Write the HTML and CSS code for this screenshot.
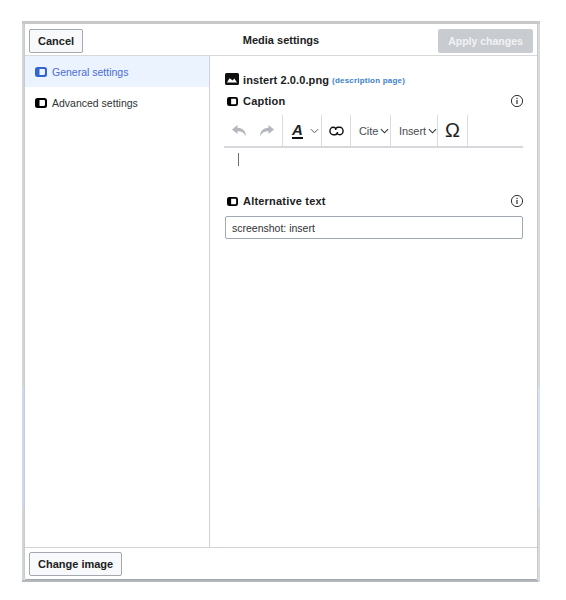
FILE: index.html
```html
<!DOCTYPE html>
<html lang="en">
<head>
<meta charset="utf-8">
<title>Media settings</title>
<link rel="stylesheet" href="styles.css">
</head>
<body>
<div class="backdrop">
  <span class="strip strip-left"></span>
  <span class="strip strip-right"></span>
  <span class="smudge"></span>
  <div class="dialog">
    <header class="head">
      <button class="btn">Cancel</button>
      <div class="title">Media settings</div>
      <button class="btn-apply">Apply changes</button>
    </header>
    <div class="body">
      <nav class="side">
        <div class="side-item active">
          <svg class="ico" viewBox="0 0 12 12"><use href="#mark"/></svg>
          <span>General settings</span>
        </div>
        <div class="side-item">
          <svg class="ico" viewBox="0 0 12 12"><use href="#mark"/></svg>
          <span>Advanced settings</span>
        </div>
      </nav>
      <main class="main">
        <div class="file">
          <svg class="img-ico" viewBox="0 0 14 12"><path fill="#111" fill-rule="evenodd" d="M1.5 0h11A1.5 1.5 0 0 1 14 1.5v9a1.5 1.5 0 0 1-1.5 1.5h-11A1.5 1.5 0 0 1 0 10.500v-9A1.500 1.500 0 0 1 1.500 0zM2 9.500h10L9.300 5.500 7.600 7.600 6 6.300 4.500 5.200z"/></svg>
          <span class="file-name">instert 2.0.0.png</span>
          <span class="file-link">(description page)</span>
        </div>
        <div class="field-label caption-label">
          <svg class="ico" viewBox="0 0 12 12"><use href="#mark"/></svg>
          <span class="label-text">Caption</span>
          <svg class="info" viewBox="0 0 14 14"><use href="#info"/></svg>
        </div>
        <div class="toolbar">
          <div class="group history">
            <svg class="tool-ico" viewBox="0 0 15 11"><path fill="#b4b8bd" d="M5.500 0 0 4.500 5.500 9V6.200c3.500 0 6 1 8.500 4.800 0-4.500-3-8-8.500-8.300z"/></svg>
            <svg class="tool-ico" viewBox="0 0 15 11"><path fill="#b4b8bd" d="M9.500 0 15 4.500 9.500 9V6.200C6 6.200 3.500 7.200 1 11c0-4.500 3-8 8.500-8.300z"/></svg>
          </div>
          <div class="group style">
            <span class="style-a">A</span>
            <svg class="chev" viewBox="0 0 10 6"><path d="M1 1l4 4 4-4" fill="none" stroke="#555" stroke-width="1.100"/></svg>
          </div>
          <div class="group link">
            <svg class="link-ico" viewBox="0 0 16 10"><path fill="none" stroke="#111" stroke-width="1.500" d="M7 2.200C6.200 1.400 5.400 1 4.400 1 2.500 1 1 2.800 1 5s1.500 4 3.400 4h1.800c1.600 0 2.800-1.400 2.800-3M9 7.800c.8.800 1.600 1.200 2.600 1.200C13.500 9 15 7.200 15 5s-1.500-4-3.400-4H9.800C8.200 1 7 2.400 7 4"/></svg>
          </div>
          <div class="group menu cite"><span>Cite</span><svg class="chev dark" viewBox="0 0 10 6"><path d="M1 1l4 4 4-4" fill="none" stroke="#333" stroke-width="1.200"/></svg></div>
          <div class="group menu insert"><span>Insert</span><svg class="chev dark" viewBox="0 0 10 6"><path d="M1 1l4 4 4-4" fill="none" stroke="#333" stroke-width="1.200"/></svg></div>
          <div class="group omega">Ω</div>
        </div>
        <div class="caption-edit"><span class="cursor"></span></div>
        <div class="field-label alt-label">
          <svg class="ico" viewBox="0 0 12 12"><use href="#mark"/></svg>
          <span class="label-text">Alternative text</span>
          <svg class="info" viewBox="0 0 14 14"><use href="#info"/></svg>
        </div>
        <div class="input">screenshot: insert</div>
      </main>
    </div>
    <footer class="foot">
      <button class="btn">Change image</button>
    </footer>
  </div>
</div>
<svg class="defs" width="0" height="0">
  <defs>
    <symbol id="mark" viewBox="0 0 12 12">
      <path fill="currentColor" fill-rule="evenodd" d="M2.500 1h7A2.500 2.500 0 0 1 12 3.500v5A2.500 2.500 0 0 1 9.500 11h-7A2.500 2.500 0 0 1 0 8.500v-5A2.500 2.500 0 0 1 2.500 1zM4.500 3v6h4.300c.7 0 1.200-.5 1.200-1.200V4.200C10 3.500 9.500 3 8.800 3z"/>
    </symbol>
    <symbol id="info" viewBox="0 0 14 14">
      <circle cx="7" cy="7" r="5.600" fill="none" stroke="#333" stroke-width="1"/>
      <rect x="6.400" y="6" width="1.200" height="4" fill="#333"/>
      <rect x="6.400" y="3.800" width="1.200" height="1.300" fill="#333"/>
    </symbol>
  </defs>
</svg>
</body>
</html>
```
FILE: styles.css
```css
* { box-sizing: border-box; }
html, body { margin: 0; padding: 0; background: #fff; }
body {
  width: 566px;
  height: 600px;
  overflow: hidden;
  font-family: "Liberation Sans", Arial, sans-serif;
  color: #202122;
}
.backdrop {
  position: relative;
  width: 518px;
  height: 561px;
  margin: 21px 0 0 22px;
  padding: 3px 2px 2px;
  background: linear-gradient(#c6c8ca, #c6c8ca) top / 100% 3px no-repeat,
    linear-gradient(#d2d4d6, #d2d4d6) left / 2px 100% no-repeat,
    linear-gradient(#d8dadc, #d8dadc) right / 2px 100% no-repeat;
}
.strip { position: absolute; top: 366px; height: 120px; width: 2px; background: #c9d9f2; }
.strip-left { left: 0; }
.strip-right { right: 0; background: #d6e2f8; }
.smudge {
  position: absolute;
  left: 0;
  right: 2px;
  bottom: 0;
  height: 2px;
  background: #b4b6b9;
}
.dialog {
  display: flex;
  flex-direction: column;
  height: 100%;
  background: #fff;
  border-right: 1px solid #c8ccd1;
  border-left: 1px solid #c8ccd1;
  border-bottom: 1px solid #a2a9b1;
  border-radius: 0 0 2px 2px;
  position: relative;
}
.head {
  display: grid;
  grid-template-columns: 1fr auto 1fr;
  align-items: start;
  height: 32px;
  padding: 5px 4px 0;
  border-bottom: 1px solid #d6d8da;
}
.btn {
  height: 24px;
  padding: 0 8px;
  font: bold 11px "Liberation Sans", Arial, sans-serif;
  color: #202122;
  background: #f8f9fa;
  border: 1px solid #a2a9b1;
  border-radius: 2px;
}
.head .btn { justify-self: start; }
.title { font-size: 11px; font-weight: bold; line-height: 22px; color: #202122; }
.btn-apply {
  justify-self: end;
  width: 95px;
  height: 24px;
  padding: 0;
  font: bold 10.500px "Liberation Sans", Arial, sans-serif;
  color: #f2f3f4;
  background: #c8ccd1;
  border: 0;
  border-radius: 2px;
}
.body { flex: 1; display: flex; min-height: 0; }
.side { width: 185px; flex: none; border-right: 1px solid #d0d2d5; }
.side-item {
  display: flex;
  align-items: center;
  gap: 5px;
  height: 31px;
  padding: 1px 0 0 10px;
  font-size: 10.500px;
  color: #303234;
}
.side-item.active { background: #eaf3ff; color: #4a6cd4; }
.ico { width: 12px; height: 12px; flex: none; color: #000; }
.active .ico { color: #3366cc; }
.main { flex: 1; padding: 15px 15px 0 14px; }
.file { display: flex; align-items: center; height: 18px; }
.img-ico { width: 14px; height: 12px; margin-left: 1px; margin-right: 4px; margin-top: -3px; flex: none; }
.file-name { font-size: 11px; font-weight: bold; letter-spacing: .1px; color: #202122; }
.file-link { font-size: 8px; font-weight: bold; margin-left: 3px; letter-spacing: .2px; color: #3b82c8; }
.field-label { display: flex; align-items: center; height: 16px; padding-left: 3px; }
.field-label .ico { margin-right: 5px; width: 11px; height: 11px; }
.label-text { font-size: 11px; font-weight: bold; letter-spacing: .2px; color: #202122; }
.caption-label { margin-top: 4px; }
.info { width: 14px; height: 14px; margin-left: auto; margin-right: -1px; flex: none; }
.toolbar {
  display: flex;
  height: 33px;
  width: 299px;
  margin-top: 6px;
  border-bottom: 2px solid #d6d8db;
}
.group {
  display: flex;
  align-items: center;
  flex: none;
  border-right: 1px solid #dadcdf;
}
.history { width: 59px; gap: 12px; padding-left: 8px; }
.tool-ico { width: 15px; height: 11px; }
.style { width: 39px; gap: 7px; padding-left: 9px; }
.style-a {
  font: italic bold 15px "Liberation Sans", Arial, sans-serif;
  line-height: 15px;
  color: #222;
  border-bottom: 2px solid #111;
}
.chev { width: 9px; height: 6px; }
.link { width: 29px; justify-content: center; }
.link-ico { width: 15px; height: 10px; }
.menu { gap: 2px; font-size: 11px; letter-spacing: -.1px; color: #4a4d50; }
.cite { width: 40px; padding-left: 8px; }
.insert { width: 47px; padding-left: 8px; }
.omega { width: 30px; justify-content: center; font-size: 20px; color: #222; }
.caption-edit { height: 38px; padding: 5px 0 0 14px; }
.cursor { display: block; width: 1px; height: 13px; background: #6b6e71; }
.alt-label { margin-top: 7px; }
.input {
  width: 298px;
  height: 23px;
  margin-top: 7px;
  margin-left: 1px;
  padding-left: 6px;
  font-size: 10.500px;
  line-height: 22px;
  color: #303234;
  border: 1px solid #a2a9b1;
  border-radius: 2px;
}
.foot {
  flex: none;
  height: 32px;
  padding: 4px;
  border-top: 1px solid #d0d2d5;
}
.defs { position: absolute; }
```
